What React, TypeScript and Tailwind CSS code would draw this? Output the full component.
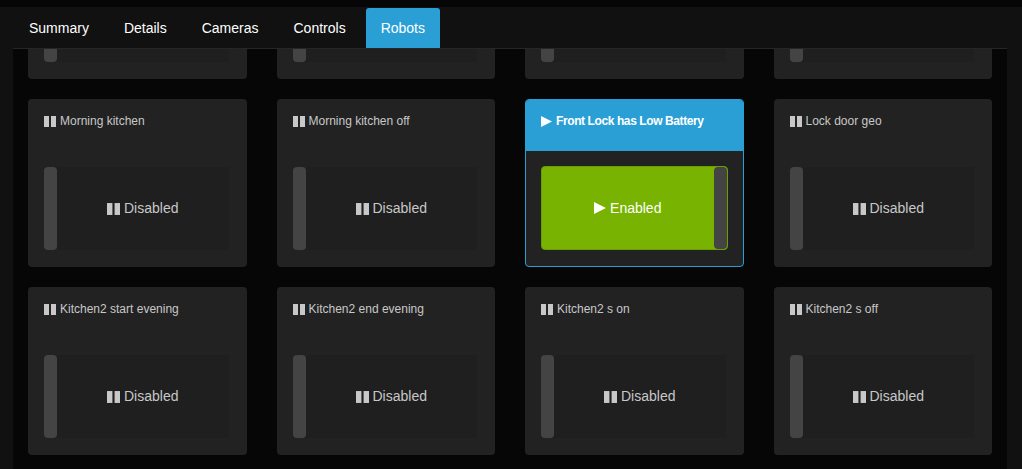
import React from 'react'

type Robot = { name: string; enabled: boolean }

const tabs = ['Summary', 'Details', 'Cameras', 'Controls', 'Robots']

const robots: Robot[] = [
  { name: 'Lights on sunset', enabled: false },
  { name: 'Lights off sunrise', enabled: false },
  { name: 'Garage door alert', enabled: false },
  { name: 'Away mode', enabled: false },
  { name: 'Morning kitchen', enabled: false },
  { name: 'Morning kitchen off', enabled: false },
  { name: 'Front Lock has Low Battery', enabled: true },
  { name: 'Lock door geo', enabled: false },
  { name: 'Kitchen2 start evening', enabled: false },
  { name: 'Kitchen2 end evening', enabled: false },
  { name: 'Kitchen2 s on', enabled: false },
  { name: 'Kitchen2 s off', enabled: false },
]

function PauseIcon({ size = 12, className = '' }: { size?: number; className?: string }) {
  return (
    <svg width={size} height={size - 1} viewBox="0 0 12 11" className={className} fill="currentColor">
      <rect x="0" y="0" width="5" height="11" />
      <rect x="7" y="0" width="5" height="11" />
    </svg>
  )
}

function PlayIcon({ size = 11, className = '' }: { size?: number; className?: string }) {
  return (
    <svg width={size} height={size} viewBox="0 0 11 11" className={className} fill="currentColor">
      <path d="M0 0 L11 5.5 L0 11 Z" />
    </svg>
  )
}

function RobotCard({ robot }: { robot: Robot }) {
  if (robot.enabled) {
    return (
      <div className="h-[168px] rounded-[4px] border border-[#2a9fd6] bg-[#222] flex flex-col overflow-hidden">
        <div className="h-[51px] shrink-0 bg-[#2a9fd6] px-[15px] pt-[13px]">
          <div className="flex items-center gap-[4px] text-[12px] leading-[16px] font-bold tracking-[-0.4px] text-white">
            <PlayIcon />
            <span>{robot.name}</span>
          </div>
        </div>
        <div className="flex-1 px-[15px] pt-[15px] pb-[16px]">
          <div className="h-full flex rounded-[4px] border border-[#6a9f00] bg-[#77b300]">
            <div className="flex-1 flex items-center justify-center gap-[4px] text-[14px] text-white">
              <PlayIcon size={12} />
              <span>Enabled</span>
            </div>
            <div className="w-[13px] rounded-[4px] bg-[#444]" />
          </div>
        </div>
      </div>
    )
  }
  return (
    <div className="h-[168px] rounded-[4px] bg-[#222] flex flex-col">
      <div className="h-[52px] shrink-0 px-4 pt-[14px]">
        <div className="flex items-center gap-[4px] text-[12px] leading-[16px] text-[#c8c8c8]">
          <PauseIcon />
          <span>{robot.name}</span>
        </div>
      </div>
      <div className="flex-1 pl-4 pr-[18px] pt-4 pb-[17px]">
        <div className="h-full flex">
          <div className="w-[13px] rounded-[4px] bg-[#444]" />
          <div className="flex-1 flex items-center justify-center gap-[4px] bg-[#1f1f1f] text-[14px] text-[#c8c8c8]">
            <PauseIcon size={13} />
            <span>Disabled</span>
          </div>
        </div>
      </div>
    </div>
  )
}

export default function App() {
  return (
    <div
      className="w-[1022px] h-[469px] overflow-hidden bg-[#111] border-t-[7px] border-[#060606] flex flex-col"
      style={{ fontFamily: '"Liberation Sans", Arial, sans-serif' }}
    >
      <div className="h-[41px] shrink-0 flex items-end gap-[5px] pl-[14px]">
        {tabs.map((t) => (
          <div
            key={t}
            className={
              t === 'Robots'
                ? 'h-[40px] px-[15px] flex items-center rounded-t-[3px] bg-[#2a9fd6] text-white text-[14px]'
                : 'h-[40px] px-[15px] flex items-center text-white text-[14px]'
            }
          >
            {t}
          </div>
        ))}
      </div>
      <div className="flex-1 ml-[13px] mr-[15px] bg-[#060606] border-t border-[#262626] overflow-hidden">
        <div className="mt-[-138px] grid grid-cols-4 gap-x-[30px] gap-y-[20px] px-[15px]">
          {robots.map((r) => (
            <RobotCard key={r.name} robot={r} />
          ))}
        </div>
      </div>
    </div>
  )
}
